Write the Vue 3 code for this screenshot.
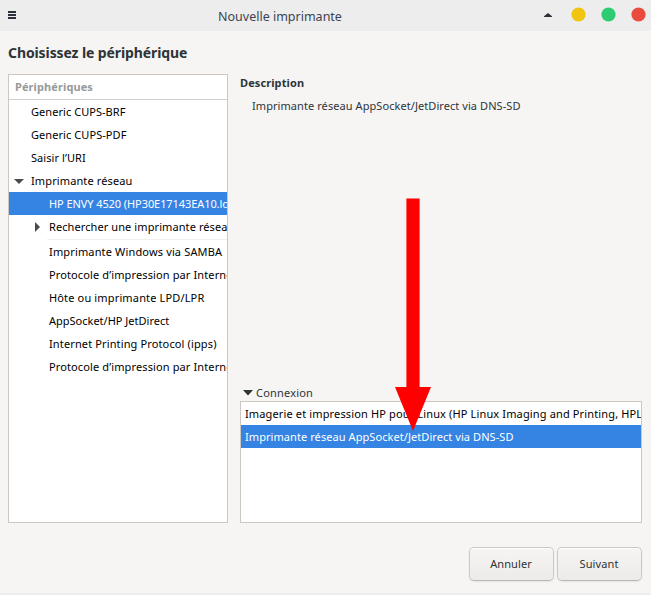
<script setup>
const devices = [
  { label: 'Generic CUPS-BRF', level: 0, tracking: 0.05 },
  { label: 'Generic CUPS-PDF', level: 0, tracking: 0.07 },
  { label: 'Saisir l’URI', level: 0, tracking: 0.07 },
  { label: 'Imprimante réseau', level: 0, arrow: 'down', tracking: 0.12 },
  { label: 'HP ENVY 4520 (HP30E17143EA10.local)', level: 1, selected: true, tracking: -0.08 },
  { label: 'Rechercher une imprimante réseau', level: 1, arrow: 'right', tracking: 0.09 },
  { separator: true },
  { label: 'Imprimante Windows via SAMBA', level: 1, tracking: 0.15 },
  { label: 'Protocole d’impression par Internet (ipp)', level: 1, tracking: 0.12 },
  { label: 'Hôte ou imprimante LPD/LPR', level: 1, tracking: 0.15 },
  { label: 'AppSocket/HP JetDirect', level: 1, tracking: 0 },
  { label: 'Internet Printing Protocol (ipps)', level: 1, tracking: 0.13 },
  { label: 'Protocole d’impression par Internet (https)', level: 1, tracking: 0.12 }
]
const connections = [
  { label: 'Imagerie et impression HP pour Linux (HP Linux Imaging and Printing, HPLIP)', tracking: 0.14 },
  { label: 'Imprimante réseau AppSocket/JetDirect via DNS-SD', selected: true, tracking: 0.07 }
]
const dots = ['#f1c40f', '#2ecc71', '#e94b3c']
</script>

<template>
  <div class="window">
    <header class="titlebar">
      <svg class="menu" width="8" height="8" viewBox="0 0 8 8" shape-rendering="crispEdges">
        <path d="M0 0h8v2H0zM0 3h8v2H0zM0 6h8v2H0z" fill="#2b303b" />
      </svg>
      <span class="title">Nouvelle imprimante</span>
      <svg class="shade" width="8" height="4" viewBox="0 0 8 4"><path d="M0 4V3.2L4 0l4 3.2V4z" fill="#2b303b" /></svg>
      <svg v-for="color in dots" :key="color" class="dot" width="15" height="15" viewBox="0 0 15 15">
        <circle cx="7.5" cy="7.5" r="7.1" :fill="color" />
      </svg>
    </header>

    <h1>Choisissez le périphérique</h1>

    <main class="panes">
      <section class="tree">
        <div class="tree-head">Périphériques</div>
        <template v-for="(d, i) in devices" :key="i">
          <div v-if="d.separator" class="separator"></div>
          <div v-else class="row" :class="['level' + d.level, { selected: d.selected }]">
            <span class="expander">
              <svg v-if="d.arrow === 'down'" class="down" width="10" height="5" viewBox="0 0 10 5"><path d="M0 0h10L5 5z" fill="#4a4a4a" /></svg>
              <svg v-if="d.arrow === 'right'" width="5" height="10" viewBox="0 0 5 10"><path d="M0 0v10L5 5z" fill="#4a4a4a" /></svg>
            </span>
            <span class="label" :style="{ letterSpacing: d.tracking + 'px' }">{{ d.label }}</span>
          </div>
        </template>
      </section>

      <section class="detail">
        <h2>Description</h2>
        <p>Imprimante réseau AppSocket/JetDirect via DNS-SD</p>
        <div class="connexion">
          <svg width="10" height="6" viewBox="0 0 10 6"><path d="M0 0h10L5 5.5z" fill="#2e3436" /></svg>
          <span>Connexion</span>
        </div>
        <div class="list">
          <div v-for="c in connections" :key="c.label" class="row" :class="{ selected: c.selected }" :style="{ letterSpacing: c.tracking + 'px' }">{{ c.label }}</div>
        </div>
      </section>
    </main>

    <footer class="actions">
      <button>Annuler</button>
      <button>Suivant</button>
    </footer>
    <div class="frame-edge"></div>

    <svg class="pointer" width="36" height="233" viewBox="0 0 36 233">
      <path d="M11.4 0.4h13.2V189H36L18 233 0 189h11.4z" fill="#f00" />
    </svg>
  </div>
</template>

<style>
body {
  margin: 0;
}
</style>

<style scoped>
.window {
  position: relative;
  display: flex;
  flex-direction: column;
  width: 651px;
  height: 595px;
  overflow: hidden;
  box-sizing: border-box;
  background: #f6f5f4;
  color: #2e3436;
  font: 11px/23px "Noto Sans", sans-serif;
}
.titlebar {
  display: flex;
  align-items: center;
  flex: none;
  height: 31px;
  box-sizing: border-box;
  padding: 0 5px 2px 8px;
  background: #ededed;
}
.menu {
  margin-top: 1px;
}
.title {
  flex: 1;
  margin-left: 202px;
  font-size: 12.5px;
  line-height: 20px;
  padding-top: 4px;
  color: #3d4350;
}
.shade {
  margin: 1px 12px 0 0;
}
.dot {
  margin-left: 15px;
}
.shade + .dot {
  margin-left: 7px;
}
h1 {
  flex: none;
  margin: 12px 0 11px 8px;
  font-size: 14px;
  line-height: 20px;
  font-weight: 700;
  letter-spacing: -0.1px;
}
.panes {
  display: flex;
  flex: none;
  gap: 12px;
  height: 449px;
  padding: 0 9px 0 8px;
}
.tree,
.list {
  box-sizing: border-box;
  border: 1px solid #cdc7c2;
  background: #fff;
  color: #000;
  overflow: hidden;
}
.tree {
  width: 220px;
  flex: none;
}
.tree-head {
  height: 24px;
  padding-left: 6px;
  border-bottom: 1px solid #d5d0cc;
  font-weight: 700;
  line-height: 24px;
  letter-spacing: 0.1px;
  color: #979a9b;
}
.row {
  display: flex;
  height: 23px;
  white-space: nowrap;
}
.selected {
  background: #3584e4;
  color: #fff;
}
.expander {
  display: flex;
  align-items: center;
  justify-content: center;
  flex: none;
  width: 20px;
  margin-right: 2px;
}
.down {
  margin-top: 2px;
}
.level1 .expander {
  margin-left: 18px;
}
.separator {
  height: 1px;
  margin: 1px 0 0 38px;
  background: #f0f0ef;
}
.detail {
  display: flex;
  flex-direction: column;
  flex: 1;
  min-width: 0;
}
h2 {
  margin: -3px 0 0;
  font-size: 11px;
  line-height: 23px;
  letter-spacing: 0.1px;
}
p {
  margin: 0 0 0 12px;
  letter-spacing: 0.07px;
}
.connexion {
  display: flex;
  align-items: center;
  gap: 3px;
  height: 18px;
  margin: auto 0 0 3px;
  letter-spacing: 0.2px;
}
.connexion svg {
  margin-top: 2px;
}
.list {
  flex: none;
  height: 122px;
}
.list .row {
  padding-left: 4px;
}
.actions {
  display: flex;
  justify-content: flex-end;
  flex: none;
  gap: 3px;
  margin: 24px 9px 0 0;
}
button {
  width: 85px;
  height: 34px;
  padding: 0 1px 2px 0;
  border: 1px solid #cdc7c2;
  border-bottom-color: #bfb8b1;
  border-radius: 5px;
  background: linear-gradient(to top, #edebe9, #f6f5f4);
  box-shadow: inset 0 1px #fff, 0 1px 2px rgba(0, 0, 0, 0.07);
  color: #2e3436;
  font: inherit;
  letter-spacing: 0.1px;
}
.frame-edge {
  height: 2px;
  margin-top: auto;
  background: #ededed;
}
.pointer {
  position: absolute;
  left: 395px;
  top: 198px;
}
</style>
